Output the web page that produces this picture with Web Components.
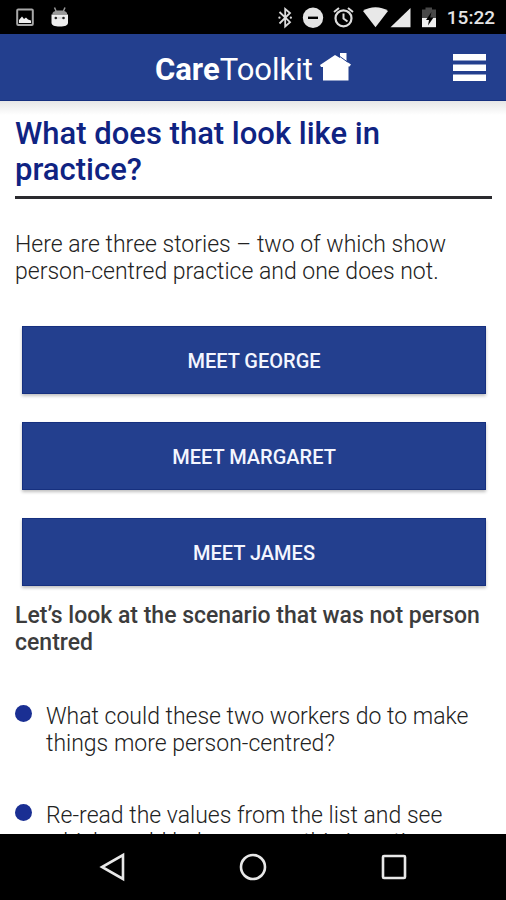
<!DOCTYPE html>
<html lang="en">
<head>
<meta charset="utf-8">
<meta name="viewport" content="width=device-width, initial-scale=1">
<title>Care Toolkit</title>
<style>
  html, body { height: 100%; margin: 0; }
  body { font-family: Roboto, "Liberation Sans", sans-serif; color: #3c3c3c; background: #fff; }
</style>
</head>
<body>
<care-app>
  <status-bar slot="status"></status-bar>
  <app-header slot="header"></app-header>
  <page-title>What does that look like in practice?</page-title>
  <body-text>Here are three stories – two of which show person-centred practice and one does not.</body-text>
  <story-buttons>
    <story-button>Meet George</story-button>
    <story-button>Meet Margaret</story-button>
    <story-button>Meet James</story-button>
  </story-buttons>
  <sub-heading>Let’s look at the scenario that was not person centred</sub-heading>
  <bullet-list>
    <bullet-item>What could these two workers do to make things more person-centred?</bullet-item>
    <bullet-item>Re-read the values from the list and see which could help you see this in action.</bullet-item>
  </bullet-list>
  <nav-bar slot="nav"></nav-bar>
</care-app>
<script>
  const define = (name, html) => customElements.define(name, class extends HTMLElement {
    constructor() {
      super();
      this.attachShadow({ mode: 'open' }).innerHTML = html;
    }
  });

  define('care-app', `
    <style>
      :host { display: flex; flex-direction: column; height: 100vh; overflow: hidden; }
      main { flex: 1; min-height: 0; overflow: hidden; padding: 15px 14px 0 15px;
        background: linear-gradient(#e6e6e6, #fff 14px); }
    </style>
    <slot name="status"></slot>
    <slot name="header"></slot>
    <main><slot></slot></main>
    <slot name="nav"></slot>`);

  define('status-bar', `
    <style>
      :host { display: flex; flex: none; align-items: center; justify-content: space-between;
        height: 34px; padding: 0 11px 0 16px; background: #000; color: #e4e4e4; }
      div { display: flex; align-items: center; }
      .left { gap: 16px; }
      svg { display: block; }
      time { font-size: 19px; line-height: 24px; font-weight: 500; margin: 2px 0 0 7px; }
    </style>
    <div class="left">
      <svg width="18" height="20" viewBox="0 0 18 20" role="img" aria-label="Screenshot saved">
        <rect x="1.200" y="2.500" width="15.600" height="15.600" rx="1" fill="none" stroke="#a8a8a8" stroke-width="2"/>
        <path d="M3 16v-3l3-3.500 2 2.500 2-1.500 2 2 3 1v2.500z" fill="#f0f0f0"/>
      </svg>
      <svg width="20" height="22" viewBox="0 0 20 22" role="img" aria-label="Android">
        <path d="M4.500 1.500L6.500 6M15 1.500L13 6" stroke="#999" stroke-width="1.500"/>
        <path d="M2.500 8.500V7c1-2 4-2.500 7.300-2.500S16 5 17 7v1.500z" fill="#999"/>
        <path d="M1.500 8.500h16.500v8c0 3-3 4-8.200 4s-8.300-1-8.300-4z" fill="#eee"/>
        <circle cx="5.800" cy="12" r="1.300" fill="#222"/><circle cx="13.500" cy="12" r="1.300" fill="#222"/>
        <path d="M7 12h5" stroke="#bbb" stroke-width=".7"/>
      </svg>
    </div>
    <div>
      <svg width="164" height="24" viewBox="276 5 164 24" role="img" aria-label="Bluetooth, do not disturb, alarm, Wi-Fi, signal, battery">
        <g fill="none" stroke="#dcdcdc" stroke-width="1.800">
          <path d="M279.500 12l10.500 10.200-4.800 4.300V9l4.800 4-10.500 10.500"/>
          <path d="M279.400 17.700h.1M290.800 17.700h.1" stroke-width="2.200" stroke-linecap="round"/>
        </g>
        <circle cx="313" cy="17.800" r="10.200" fill="#e4e4e4"/>
        <path d="M308 17.800h10" stroke="#000" stroke-width="2.400"/>
        <g fill="none" stroke="#dcdcdc" stroke-width="2.200">
          <circle cx="343.500" cy="18.300" r="8"/>
          <path d="M343.500 13.500v5l4 3M334 12l5-4M353 12l-5-4" stroke-width="2"/>
        </g>
        <path d="M363 11c7-5 18-5 25 0l-12.500 16.200z" fill="#e8e8e8"/>
        <path d="M410.500 8v19.200h-20z" fill="#e8e8e8"/>
        <path d="M425.500 9.500v-2h6.500v2h4V18h-14V9.500z" fill="#484848"/>
        <path d="M422 18h14v9.200h-14z" fill="#f0f0f0"/>
        <path d="M431.500 12l-5.500 8h3l-1 5.500 5.500-8h-3.300z" fill="#000"/>
      </svg>
      <time>15:22</time>
    </div>`);

  define('app-header', `
    <style>
      :host { display: grid; grid-template-columns: 1fr auto 1fr; align-items: center; flex: none;
        height: 67px; box-sizing: border-box; padding: 2px 20px 0; background: #233f8e;
        border-bottom: 1px solid #16307f; color: #fff; }
      a { grid-column: 2; display: flex; align-items: center; gap: 7px; color: inherit; text-decoration: none;
        font-size: 31px; line-height: 38px; font-weight: 400; }
      span { padding-top: 4px; }
      b { font-weight: 700; }
      svg { display: block; }
      button { justify-self: end; padding: 0; border: 0; background: none; }
    </style>
    <a href="#home"><span><b>Care</b>Toolkit</span>
      <svg width="31" height="30" viewBox="0 0 31 30" aria-hidden="true">
        <path d="M0 12L15 2l5 3V0h6.500v8.500l4.500 3-1.500 2H28.500V27.500H3V14H1z" fill="#fff"/>
        <path d="M18.500 2.500l9 6.500" stroke="#233f8e" stroke-width="1"/>
      </svg>
    </a>
    <button aria-label="Menu">
      <svg width="33" height="30" viewBox="0 0 33 30" aria-hidden="true">
        <path d="M0 1h33v6.500H0zM0 11.500h33v6.500H0zM0 21.500h33v6.500H0z" fill="#fff"/>
      </svg>
    </button>`);

  define('page-title', `
    <style>
      :host { display: block; border-bottom: 3px solid #2a2a2e; padding-bottom: 8px; }
      h1 { margin: 0; font-size: 31px; line-height: 36px; font-weight: 500; color: #0f2382; }
    </style>
    <h1><slot></slot></h1>`);

  define('body-text', `
    <style>
      :host { display: block; margin-top: 32px; }
      p { margin: 0; font-size: 23px; line-height: 27px; font-weight: 300; color: #222; }
    </style>
    <p><slot></slot></p>`);

  define('story-buttons', `
    <style>
      :host { display: flex; flex-direction: column; gap: 28px; margin: 41px 6px 0 7px; }
    </style>
    <slot></slot>`);

  define('story-button', `
    <style>
      :host { display: block; }
      button { display: block; width: 100%; height: 68px; padding: 2px 0 0; border: 0; background: #233f8e;
        box-shadow: inset 0 0 0 1px #16307f, 0 2px 3px rgba(0,0,0,.25); color: #f4f6ff;
        font: 500 20px/24px Roboto, "Liberation Sans", sans-serif; text-transform: uppercase; }
    </style>
    <button type="button"><slot></slot></button>`);

  define('sub-heading', `
    <style>
      :host { display: block; margin-top: 16px; }
      h2 { margin: 0; font-size: 23px; line-height: 27px; font-weight: 500; }
    </style>
    <h2><slot></slot></h2>`);

  define('bullet-list', `
    <style>
      :host { display: block; margin-top: 47px; }
      div { display: flex; flex-direction: column; gap: 45px; }
    </style>
    <div role="list"><slot></slot></div>`);

  define('bullet-item', `
    <style>
      :host { display: block; }
      div { display: flex; align-items: flex-start; gap: 14px; font-size: 23px; line-height: 27px; font-weight: 300; color: #222; }
      i { flex: none; width: 17px; height: 17px; margin-top: 2px; border-radius: 50%; background: #1a2f93; }
    </style>
    <div role="listitem"><i></i><span><slot></slot></span></div>`);

  define('nav-bar', `
    <style>
      :host { display: flex; flex: none; justify-content: center; align-items: center; gap: 113px;
        height: 66px; background: #000; }
      button { padding: 0; border: 0; background: none; }
      svg { display: block; fill: none; stroke: #e8e8e8; stroke-width: 2.600; }
    </style>
    <button aria-label="Back"><svg width="28" height="30" viewBox="0 0 28 30"><path d="M25 3v24L4 15z"/></svg></button>
    <button aria-label="Home"><svg width="28" height="30" viewBox="0 0 28 30"><circle cx="14" cy="15" r="12"/></svg></button>
    <button aria-label="Overview"><svg width="28" height="30" viewBox="0 0 28 30"><rect x="3" y="4" width="22" height="22" rx="1"/></svg></button>`);
</script>
</body>
</html>
